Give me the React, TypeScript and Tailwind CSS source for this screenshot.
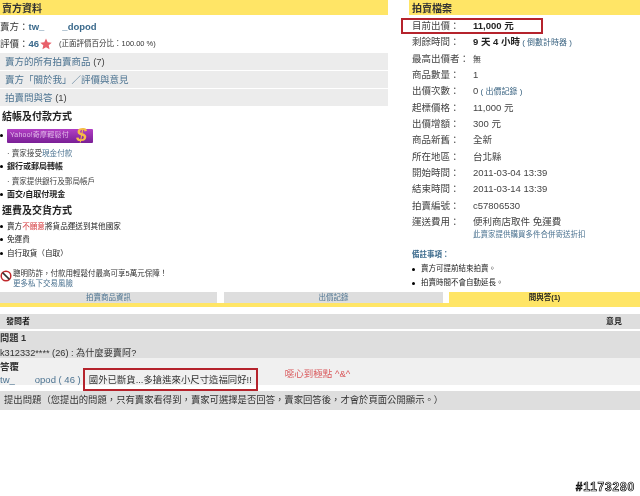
const font = '[font-family:"Liberation_Sans","Noto_Sans_CJK_TC",sans-serif]'

const auctionRows: Array<{ label: string; value: React.ReactNode }> = [
  { label: '目前出價：', value: <b className="text-[#222]">11,000 元</b> },
  {
    label: '剩餘時間：',
    value: (
      <>
        <b className="text-[#222]">9 天 4 小時</b>
        <span className="text-[8px] text-[#36607f]"> ( 倒數計時器 )</span>
      </>
    ),
  },
  { label: '最高出價者：', value: <span className="text-[8px] text-[#222]">無</span> },
  { label: '商品數量：', value: '1' },
  {
    label: '出價次數：',
    value: (
      <>
        0<span className="text-[8px] text-[#36607f]"> ( 出價記錄 )</span>
      </>
    ),
  },
  { label: '起標價格：', value: '11,000 元' },
  { label: '出價增額：', value: '300 元' },
  { label: '商品新舊：', value: '全新' },
  { label: '所在地區：', value: '台北縣' },
  { label: '開始時間：', value: '2011-03-04 13:39' },
  { label: '結束時間：', value: '2011-03-14 13:39' },
  { label: '拍賣編號：', value: 'c57806530' },
  { label: '運送費用：', value: '便利商店取件 免運費' },
]

const SectionHeader = ({ title, indent }: { title: string; indent?: boolean }) => (
  <div className={`h-[15px] bg-[#ffe566] text-[10px] leading-[17px] font-bold text-[#333] ${indent ? 'pl-[3px]' : 'pl-[2px]'}`}>
    {title}
  </div>
)

const GrayLink = ({ text, count }: { text: string; count?: string }) => (
  <div className="h-[17px] bg-[#ececec] pl-[5px] text-[9.5px] leading-[17px] text-[#4c7391]">
    {text}
    {count && <span className="text-[#444]"> {count}</span>}
  </div>
)

const Dot = () => <span className="mr-[4px] inline-block size-[3px] rounded-full bg-black align-middle" />

const SmallRow = ({ children, bold }: { children: React.ReactNode; bold?: boolean }) => (
  <div className={`flex h-[13px] items-center leading-[13px] text-[#222] ${bold ? 'text-[8px] font-bold' : 'text-[7.6px]'}`}>
    {children}
  </div>
)

const SellerPanel = () => (
  <div className="w-[388px]">
    <SectionHeader title="賣方資料" />
    <div className="mt-[4px] flex h-[16px] items-center text-[9.5px] text-[#333]">
      賣方：<b className="text-[#3b6a8c]">tw_</b>
      <span className="w-[18px]" />
      <b className="text-[#3b6a8c]">_dopod</b>
    </div>
    <div className="mt-[1px] flex h-[16px] items-center text-[9.5px] text-[#333]">
      評價：<b className="text-[#3b6a8c]">46</b>
      <svg className="mx-px" width="12" height="12" viewBox="0 0 24 24">
        <path d="M12 1l3.4 7.4 8 .9-6 5.4 1.700 8L12 18.700 4.900 22.700l1.700-8-6-5.400 8-.9z" fill="#e8606a" />
      </svg>
      <span className="ml-[6px] text-[7.5px]">(正面評價百分比：100.00 %)</span>
    </div>
    <div className="mt-[1px] flex flex-col gap-px">
      <GrayLink text="賣方的所有拍賣商品" count="(7)" />
      <GrayLink text="賣方「關於我」／評價與意見" />
      <GrayLink text="拍賣問與答" count="(1)" />
    </div>

    <div className="mt-[4px] h-[14px] pl-[2px] text-[10px] leading-[14px] font-bold text-[#222]">結帳及付款方式</div>
    <div className="mt-[4px] flex h-[15px] items-center">
      <Dot />
      <div className="relative flex h-[14px] w-[86px] items-center rounded-[1px] bg-gradient-to-b from-[#b23ec4] to-[#7a1f96] pl-[3px] text-[7px] tracking-[0.2px] text-[#e3bcea]">
        Yahoo!奇摩輕鬆付
        <span className="absolute top-[-4px] right-[6px] text-[19px] leading-[20px] font-bold text-[#f6bd45] italic">$</span>
      </div>
    </div>
    <div className="mt-[4px] pl-[7px] text-[7.6px] leading-[13px] text-[#444]">
      · 賣家接受<span className="text-[#4c7391]">現金付款</span>
    </div>
    <div className="mt-[0px]">
      <SmallRow bold>
        <Dot />
        銀行或郵局轉帳
      </SmallRow>
    </div>
    <div className="mt-[2px] pl-[7px] text-[7.6px] leading-[13px] text-[#444]">· 賣家提供銀行及郵局帳戶</div>
    <div className="mt-[0px]">
      <SmallRow bold>
        <Dot />
        面交/自取付現金
      </SmallRow>
    </div>

    <div className="mt-[2px] h-[15px] pl-[2px] text-[10px] leading-[15px] font-bold text-[#222]">運費及交貨方式</div>
    <div className="mt-[2px] flex flex-col">
      <SmallRow>
        <Dot />
        賣方<span className="text-[#d5393c]">不願意</span>將貨品運送到其他國家
      </SmallRow>
      <SmallRow>
        <Dot />
        免運費
      </SmallRow>
      <div className="mt-px">
        <SmallRow>
          <Dot />
          自行取貨（自取）
        </SmallRow>
      </div>
    </div>

    <div className="mt-[9px] flex">
      <svg className="mt-[1px] mr-px" width="12" height="12" viewBox="0 0 12 12">
        <circle cx="6" cy="6" r="4.800" fill="none" stroke="#c0282c" strokeWidth="1.500" />
        <path d="M2.600 2.600l6.800 6.800" stroke="#333" strokeWidth="1.500" />
      </svg>
      <div className="text-[7.5px] leading-[10px] text-[#333]">
        聰明防詐，付款用輕鬆付最高可享5萬元保障！
        <div className="text-[#4c7391]">更多私下交易風險</div>
      </div>
    </div>
  </div>
)

const AuctionPanel = () => (
  <div className="ml-[21px] flex-1">
    <SectionHeader title="拍賣檔案" indent />
    <div className="mt-[3px] flex flex-col pl-[3px]">
      {auctionRows.map((row) => (
        <div key={row.label} className="flex h-[16.350px] items-center text-[9.500px] text-[#444]">
          <span className="w-[61px]">{row.label}</span>
          <span>{row.value}</span>
        </div>
      ))}
    </div>
    <div className="pl-[64px] text-[7.500px] leading-[9px] text-[#4c7391]">此賣家提供購買多件合併寄送折扣</div>
    <div className="mt-[11px] pl-[3px] text-[7.500px] leading-[10px] font-bold text-[#3b6a8c]">備註事項：</div>
    <div className="mt-[2px] pl-[3px]">
      <div className="h-[14px] text-[7.500px] leading-[14px] text-[#222]">
        <span className="mr-[6px] inline-block size-[3px] rounded-full bg-black align-middle" />
        賣方可提前結束拍賣。
      </div>
      <div className="h-[14px] text-[7.500px] leading-[14px] text-[#222]">
        <span className="mr-[6px] inline-block size-[3px] rounded-full bg-black align-middle" />
        拍賣時間不會自動延長。
      </div>
    </div>
  </div>
)

const Tabs = () => (
  <div className="border-b-[4px] border-[#ffe566]">
    <div className="flex h-[11px] text-center text-[7.500px] leading-[12px]">
      <div className="w-[217px] bg-[#dedede] text-[#4c7391]">拍賣商品資訊</div>
      <div className="ml-[7px] w-[219px] bg-[#dedede] text-[#4c7391]">出價記錄</div>
      <div className="ml-[6px] flex-1 bg-[#ffe566] font-bold text-[#222]">問與答(1)</div>
    </div>
  </div>
)

const QuestionBlock = () => (
  <div className="mt-[7px]">
    <div className="flex h-[15px] justify-between bg-[#dedede] pr-[18px] pl-[6px] text-[8px] leading-[15px] font-bold text-[#222]">
      <span>發問者</span>
      <span>意見</span>
    </div>
    <div className="mt-[2px] h-[27px] bg-[#dedede] text-[9.200px] leading-[15px] text-[#333]">
      <div className="font-bold">問題 1</div>
      <div>k312332**** (26) : 為什麼要賣阿?</div>
    </div>
    <div className="h-[27px] bg-[#f0f0f0] text-[9.500px] leading-[13px] text-[#333]">
      <div className="pt-[2px] font-bold">答覆</div>
      <div className="flex h-[12px] items-center">
        <span className="text-[#4c7391]">tw_</span>
        <span className="w-[20px]" />
        <span className="text-[#4c7391]">opod ( 46 )</span>
        <span className="ml-[8px] text-[9.400px]">國外已斷貨...多搶進來小尺寸造福同好!!</span>
        <span className="mb-[11px] ml-[33px] text-[#d9595c]">噁心到極點 ^&amp;^</span>
      </div>
    </div>
    <div className="mt-[6px] h-[19px] bg-[#dedede] pl-[4px] text-[9.350px] leading-[19px] text-[#333]">
      提出問題（您提出的問題，只有賣家看得到，賣家可選擇是否回答，賣家回答後，才會於頁面公開顯示。）
    </div>
  </div>
)

export default function App() {
  return (
    <div className={`relative h-[496px] w-[640px] overflow-hidden bg-white ${font} blur-[0.35px]`}>
      <div className="flex h-[292px]">
        <SellerPanel />
        <AuctionPanel />
      </div>
      <Tabs />
      <QuestionBlock />

      {/* red annotation boxes drawn over the page */}
      <div className="absolute top-[18px] left-[401px] h-[16px] w-[142px] border-[2px] border-[#b5232c]" />
      <div className="absolute top-[368px] left-[83px] h-[23px] w-[175px] border-[2px] border-[#b5232c]" />

      <div className="absolute right-[5px] bottom-[2px] text-[12px] leading-[14px] font-bold tracking-[0.8px] text-white [-webkit-text-stroke:0.7px_black]">
        #1173280
      </div>
    </div>
  )
}
